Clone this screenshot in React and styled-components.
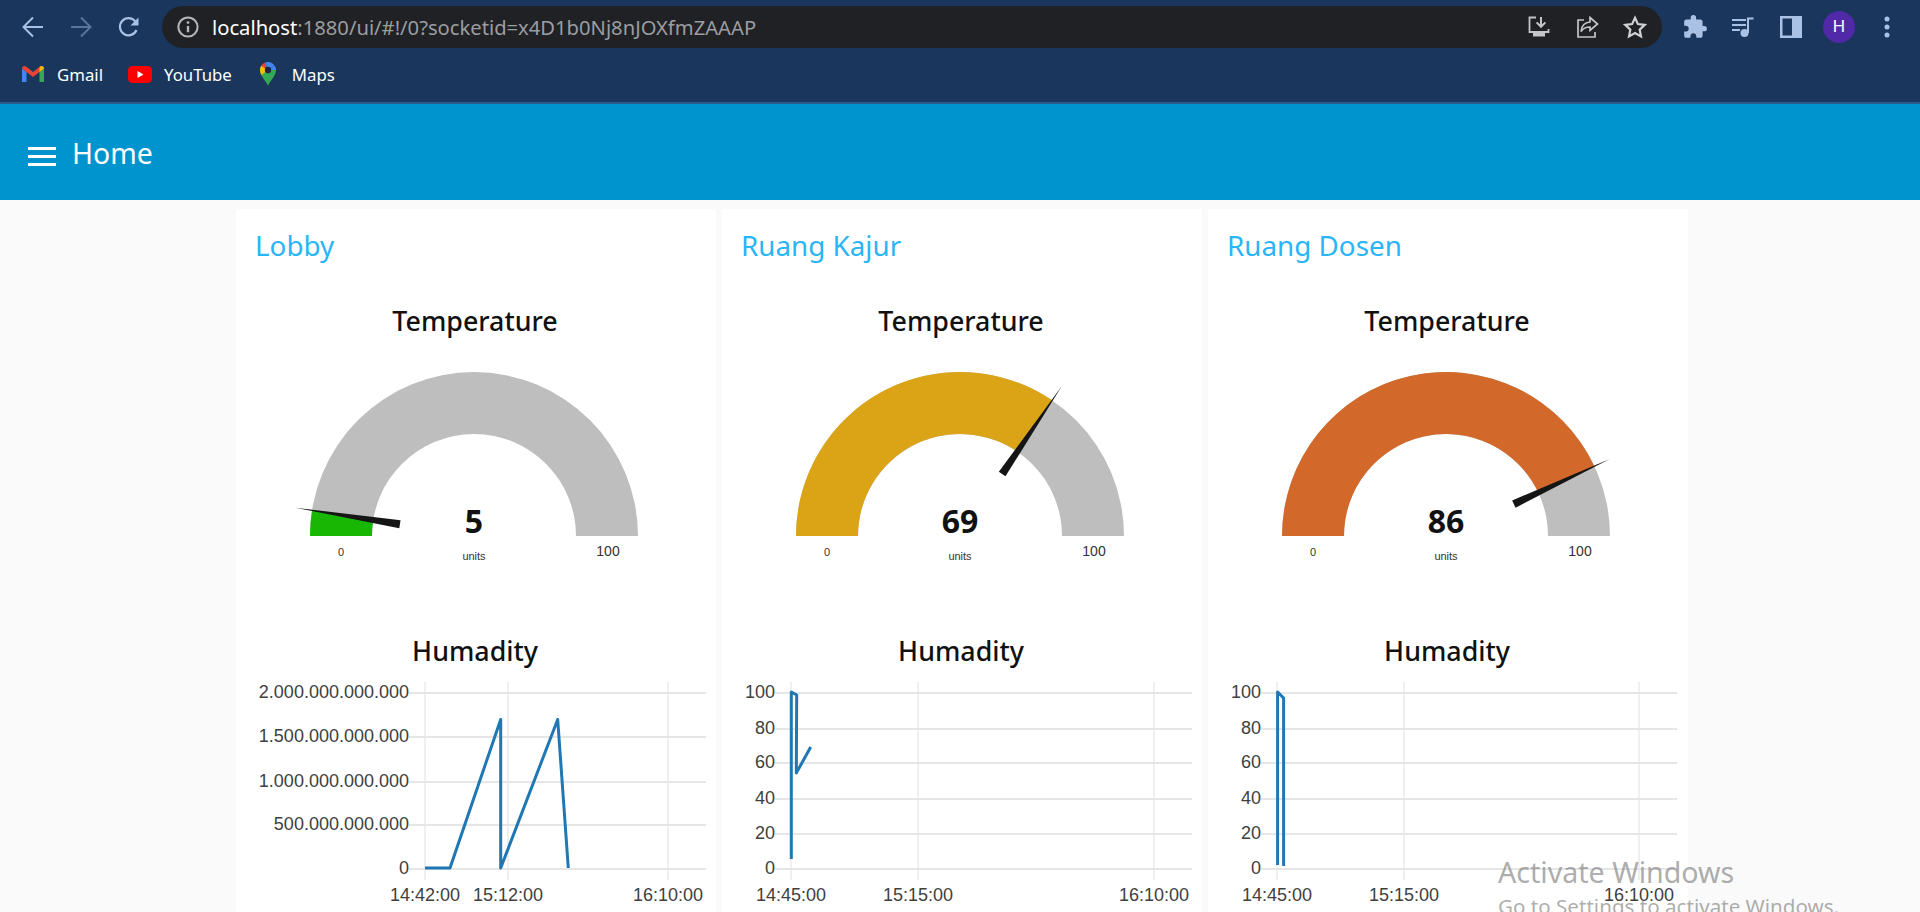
import React from 'react'
import styled, { createGlobalStyle } from 'styled-components'
import { MdExtension } from 'react-icons/md'

const UI_FONT = '"Noto Sans", "Open Sans", sans-serif'
const CHART_FONT = '"Liberation Sans", Arial, sans-serif'

const GlobalStyle = createGlobalStyle`
    html, body {
        margin: 0;
        padding: 0;
        height: 100%;
        overflow: hidden;
        background: #fafafa;
        font-family: ${UI_FONT};
    }
`

const Page = styled.div`
    position: relative;
    width: 1920px;
    height: 912px;
    overflow: hidden;
    background: #fafafa;
`

const Toolbar = styled.div`
    display: flex;
    align-items: center;
    height: 54px;
    padding-left: 9px;
    background: #1a365d;
`

const ToolButton = styled.div`
    flex: 0 0 48px;
    height: 48px;
    display: flex;
    align-items: center;
    justify-content: center;
    color: ${props => props.color || '#a8c1e4'};
    opacity: ${props => props.dim ? 0.45 : 1};
`

const Omnibox = styled.div`
    flex: 0 0 1500px;
    height: 42px;
    margin: 0 9px;
    display: flex;
    align-items: center;
    padding: 0 3px 0 15px;
    box-sizing: border-box;
    border-radius: 21px;
    background: #202124;
`

const UrlText = styled.div`
    flex: 1;
    margin-left: 13px;
    font-size: 20.2px;
    color: #9b9da1;
    white-space: nowrap;
    b {
        font-weight: 400;
        color: #fff;
    }
`

const Avatar = styled.div`
    width: 32px;
    height: 32px;
    border-radius: 50%;
    display: flex;
    align-items: center;
    justify-content: center;
    background: #5029a8;
    color: #fff;
    font-family: ${CHART_FONT};
    font-size: 17px;
`

const Bookmarks = styled.div`
    display: flex;
    align-items: center;
    box-sizing: border-box;
    height: 50px;
    padding: 0 0 8px 22px;
    background: #1a365d;
    border-bottom: 2px solid #2a5c88;
`

const Bookmark = styled.div`
    display: flex;
    align-items: center;
    gap: ${props => props.gap || 12}px;
    margin-right: ${props => props.after || 26}px;
    font-size: 16.8px;
    color: #fff;
`

const Header = styled.div`
    height: 96px;
    display: flex;
    align-items: center;
    padding-left: 28px;
    gap: 16px;
    background: #0094ce;
`

const HeaderTitle = styled.div`
    font-size: 28.4px;
    color: #fff;
    line-height: 1;
    margin-top: 3px;
`

const Burger = styled.div`
    width: 28px;
    height: 13px;
    margin-top: 8px;
    border-top: 3px solid #fff;
    border-bottom: 3px solid #fff;
    position: relative;
    &::after {
        content: '';
        position: absolute;
        left: 0;
        right: 0;
        top: 5px;
        height: 3px;
        background: #fff;
    }
`

const Columns = styled.div`
    display: grid;
    grid-template-columns: repeat(3, 480px);
    gap: 6px;
    padding: 9px 0 0 236px;
`

const Card = styled.div`
    height: 720px;
    background: #fff;
`

const CardTitle = styled.div`
    height: 72px;
    margin-bottom: 9px;
    padding-left: 19px;
    font-size: 27.8px;
    line-height: 72px;
    color: #29b5f6;
`

const WidgetTitle = styled.div`
    height: 62px;
    padding-right: 2px;
    text-align: center;
    font-size: 26.8px;
    font-weight: 500;
    line-height: 62px;
    color: #111;
`

const Drawing = styled.svg`
    display: block;
    width: 480px;
    height: ${props => props.h}px;
`

const GaugeValue = styled.text`
    font-family: ${UI_FONT};
    font-size: 32px;
    font-weight: 700;
    fill: #111;
    text-anchor: middle;
`

const GaugeLabel = styled.text`
    font-family: ${CHART_FONT};
    font-size: ${props => props.size || 11}px;
    fill: #333;
    text-anchor: middle;
`

const AxisLabel = styled.text`
    font-family: ${CHART_FONT};
    font-size: 18px;
    fill: #404040;
    text-anchor: ${props => props.anchor};
`

const Watermark = styled.div`
    position: absolute;
    left: 1498px;
    top: 852px;
    color: rgba(120, 120, 120, 0.62);
    white-space: nowrap;
`

const WatermarkBig = styled.div`
    font-size: 28.6px;
    line-height: 40px;
`

const WatermarkSmall = styled.div`
    font-size: 20.6px;
    line-height: 28px;
`

const ArrowIcon = ({ flip }) => (
    <svg width="24" height="24" viewBox="0 0 24 24" fill="none" stroke="currentColor" strokeWidth="2"
         style={flip ? { transform: 'scaleX(-1)' } : undefined}>
        <path d="M22 12H3M12 2.5L2.5 12l9.5 9.5"/>
    </svg>
)

const ReloadIcon = () => (
    <svg width="24" height="24" viewBox="0 0 24 24" fill="none" stroke="currentColor" strokeWidth="2.2">
        <path d="M19.5 15a8.6 8.6 0 1 1-1.2-8.6L20 8"/>
        <path d="M21.5 2.5v8h-8z" fill="currentColor" stroke="none"/>
    </svg>
)

const InfoIcon = () => (
    <svg width="22" height="22" viewBox="0 0 22 22" fill="none" stroke="#b4b6ba" strokeWidth="2">
        <circle cx="11" cy="11" r="9.6"/>
        <path d="M11 10v6.2" strokeWidth="2.4"/>
        <circle cx="11" cy="6.6" r="1.4" fill="#b4b6ba" stroke="none"/>
    </svg>
)

const InstallIcon = () => (
    <svg width="24" height="24" viewBox="0 0 24 24" fill="none" stroke="#c4c5c8" strokeWidth="1.8">
        <path d="M9 2.5H2.5v14.5H21.5v-3"/>
        <path d="M14 2v9.5M9.6 7.4l4.4 4.4 4.4-4.4" strokeWidth="2"/>
        <path d="M6 18h12v3.5H6z" fill="#c4c5c8" stroke="none"/>
    </svg>
)

const ShareIcon = () => (
    <svg width="24" height="24" viewBox="0 0 24 24" fill="none" stroke="#c4c5c8" strokeWidth="1.7">
        <path d="M9 5H3v17h17v-5"/>
        <path d="M15 2.5l7.5 6.5-7.5 6.5V12c-4.5 0-7 1.5-9 4.5 .5-5.5 3.5-9 9-9.5z"/>
    </svg>
)

const StarIcon = () => (
    <svg width="24" height="24" viewBox="0 0 24 24" fill="none" stroke="#d0d1d3" strokeWidth="2.2">
        <path d="M12 2.8l2.9 6.3 6.8.8-5 4.7 1.3 6.8-6-3.4-6 3.4 1.3-6.8-5-4.7 6.8-.8z"/>
    </svg>
)

const QueueIcon = () => (
    <svg width="24" height="24" viewBox="0 0 24 24" fill="none" stroke="currentColor" strokeWidth="2">
        <path d="M1 5h14M1 10h14M1 15h8"/>
        <path d="M17 18V3.5h5.5"/>
        <circle cx="13.5" cy="18" r="4" fill="currentColor" stroke="none"/>
    </svg>
)

const PanelIcon = () => (
    <svg width="22" height="22" viewBox="0 0 22 22">
        <path d="M0 0h22v22H0z" fill="currentColor"/>
        <path d="M2.5 2.5h9.5v17H2.5z" fill="#1a365d"/>
    </svg>
)

const DotsIcon = () => (
    <svg width="6" height="22" viewBox="0 0 6 22" fill="currentColor">
        <circle cx="3" cy="3" r="2.5"/>
        <circle cx="3" cy="11" r="2.5"/>
        <circle cx="3" cy="19" r="2.5"/>
    </svg>
)

const GmailIcon = () => (
    <svg width="22" height="16" viewBox="0 0 22 16">
        <path d="M0 2.5V16h4.5V6z" fill="#4285f4"/>
        <path d="M17.5 6V16H22V2.5z" fill="#34a853"/>
        <path d="M0 2.5C0 .4 2.4-.7 4 .6l7 5.4L18 .6c1.6-1.3 4-.2 4 1.9L17.5 6 11 11 4.5 6z" fill="#ea4335"/>
        <path d="M17.5 6V1.9L18 .6c1.6-1.3 4-.2 4 1.9z" fill="#fbbc04"/>
    </svg>
)

const YoutubeIcon = () => (
    <svg width="24" height="17" viewBox="0 0 24 17">
        <rect width="24" height="17" rx="4.5" fill="#f00"/>
        <path d="M9.5 5v7l6-3.5z" fill="#fff"/>
    </svg>
)

const MapsIcon = () => (
    <svg width="16" height="24" viewBox="0 0 16 24">
        <path d="M8 24C6.8 19.5 0 14.5 0 8h16c0 6.5-6.8 11.5-8 16z" fill="#34a853"/>
        <path d="M1.3 3.6A8 8 0 0 0 0 8c0 1.8.6 3.4 1.5 5L8 8z" fill="#fbbc04"/>
        <path d="M1.3 3.6A8 8 0 0 1 5 .6L8 8z" fill="#ea4335"/>
        <path d="M5 .6A8 8 0 0 1 14.5 3.5L8 8z" fill="#4285f4"/>
        <path d="M14.5 3.5A8 8 0 0 1 16 8L8 8z" fill="#4285f4"/>
        <circle cx="8" cy="8" r="3.2" fill="#1a2a3a"/>
    </svg>
)

const GAUGE_X = 238
const GAUGE_Y = 184
const R_OUT = 164
const R_IN = 102

function polar(r, pct) {
    const a = Math.PI * (1 - pct / 100)
    return [GAUGE_X + r * Math.cos(a), GAUGE_Y - r * Math.sin(a)]
}

function arcPath(pct) {
    const [ox, oy] = polar(R_OUT, pct)
    const [ix, iy] = polar(R_IN, pct)
    return `M${GAUGE_X - R_OUT} ${GAUGE_Y}A${R_OUT} ${R_OUT} 0 0 1 ${ox} ${oy}L${ix} ${iy}A${R_IN} ${R_IN} 0 0 0 ${GAUGE_X - R_IN} ${GAUGE_Y}Z`
}

function needlePath(pct) {
    const [tx, ty] = polar(181, pct)
    const [bx, by] = polar(75, pct)
    const a = Math.PI * (1 - pct / 100)
    const nx = Math.sin(a) * 4
    const ny = Math.cos(a) * 4
    return `M${tx} ${ty}L${bx + nx} ${by + ny}L${bx - nx} ${by - ny}Z`
}

function Gauge({ value, color }) {
    return <Drawing h={268} viewBox="0 0 480 268">
        <path d={arcPath(100)} fill="#bebebe"/>
        <path d={arcPath(value)} fill={color}/>
        <path d={needlePath(value)} fill="#151515"/>
        <GaugeValue x={GAUGE_X} y={GAUGE_Y - 3}>{value}</GaugeValue>
        <GaugeLabel x={GAUGE_X} y={GAUGE_Y + 24}>units</GaugeLabel>
        <GaugeLabel x={GAUGE_X - 133} y={GAUGE_Y + 20}>0</GaugeLabel>
        <GaugeLabel size={14} x={GAUGE_X + 134} y={GAUGE_Y + 20}>100</GaugeLabel>
    </Drawing>
}

function Chart({ axisX, right, yTicks, xTicks, line }) {
    return <Drawing h={230} viewBox="0 0 480 230">
        {xTicks.map(t =>
            <line key={t.x} x1={t.x} x2={t.x} y1="0" y2="198" stroke="#e0e0e0" strokeWidth="1"/>
        )}
        {yTicks.map(t =>
            <line key={t.y} x1={axisX - 16} x2={right} y1={t.y} y2={t.y} stroke="#e6e6e6" strokeWidth="2"/>
        )}
        <polyline points={line} fill="none" stroke="#1f77b4" strokeWidth="3" strokeLinejoin="round"/>
        {yTicks.map(t =>
            <AxisLabel key={t.y} anchor="end" x={axisX - 16} y={t.y + 5}>{t.label}</AxisLabel>
        )}
        {xTicks.map(t =>
            <AxisLabel key={t.x} anchor="middle" x={t.x} y={219}>{t.label}</AxisLabel>
        )}
    </Drawing>
}

const percentTicks = [
    { y: 11, label: '100' },
    { y: 47, label: '80' },
    { y: 81, label: '60' },
    { y: 117, label: '40' },
    { y: 152, label: '20' },
    { y: 187, label: '0' },
]

const rooms = [
    {
        name: 'Lobby',
        value: 5,
        color: '#17b704',
        chart: {
            axisX: 189,
            right: 470,
            yTicks: [
                { y: 11, label: '2.000.000.000.000' },
                { y: 55, label: '1.500.000.000.000' },
                { y: 100, label: '1.000.000.000.000' },
                { y: 143, label: '500.000.000.000' },
                { y: 187, label: '0' },
            ],
            xTicks: [
                { x: 189, label: '14:42:00' },
                { x: 272, label: '15:12:00' },
                { x: 432, label: '16:10:00' },
            ],
            line: '189,186 214,186 264.7,37.5 264.7,186 321.7,37.5 332.3,186',
        },
    },
    {
        name: 'Ruang Kajur',
        value: 69,
        color: '#dba416',
        chart: {
            axisX: 69,
            right: 470,
            yTicks: percentTicks,
            xTicks: [
                { x: 69, label: '14:45:00' },
                { x: 196, label: '15:15:00' },
                { x: 432, label: '16:10:00' },
            ],
            line: '69.3,177 69.3,10 74.7,13 74.3,91 88.7,65',
        },
    },
    {
        name: 'Ruang Dosen',
        value: 86,
        color: '#d26829',
        chart: {
            axisX: 69,
            right: 469,
            yTicks: percentTicks,
            xTicks: [
                { x: 69, label: '14:45:00' },
                { x: 196, label: '15:15:00' },
                { x: 431, label: '16:10:00' },
            ],
            line: '69.6,183 69.6,10 75.6,16 75.6,184',
        },
    },
]

export default function App() {
    return <Page>
        <GlobalStyle/>
        <Toolbar>
            <ToolButton><ArrowIcon/></ToolButton>
            <ToolButton dim><ArrowIcon flip/></ToolButton>
            <ToolButton><ReloadIcon/></ToolButton>
            <Omnibox>
                <InfoIcon/>
                <UrlText><b>localhost</b>:1880/ui/#!/0?socketid=x4D1b0Nj8nJOXfmZAAAP</UrlText>
                <ToolButton><InstallIcon/></ToolButton>
                <ToolButton><ShareIcon/></ToolButton>
                <ToolButton><StarIcon/></ToolButton>
            </Omnibox>
            <ToolButton><MdExtension size={26}/></ToolButton>
            <ToolButton><QueueIcon/></ToolButton>
            <ToolButton><PanelIcon/></ToolButton>
            <ToolButton><Avatar>H</Avatar></ToolButton>
            <ToolButton><DotsIcon/></ToolButton>
        </Toolbar>
        <Bookmarks>
            <Bookmark gap={13} after={25}><GmailIcon/>Gmail</Bookmark>
            <Bookmark after={28}><YoutubeIcon/>YouTube</Bookmark>
            <Bookmark gap={16}><MapsIcon/>Maps</Bookmark>
        </Bookmarks>
        <Header>
            <Burger/>
            <HeaderTitle>Home</HeaderTitle>
        </Header>
        <Columns>
            {rooms.map(room =>
                <Card key={room.name}>
                    <CardTitle>{room.name}</CardTitle>
                    <WidgetTitle>Temperature</WidgetTitle>
                    <Gauge value={room.value} color={room.color}/>
                    <WidgetTitle>Humadity</WidgetTitle>
                    <Chart {...room.chart}/>
                </Card>
            )}
        </Columns>
        <Watermark>
            <WatermarkBig>Activate Windows</WatermarkBig>
            <WatermarkSmall>Go to Settings to activate Windows.</WatermarkSmall>
        </Watermark>
    </Page>
}
